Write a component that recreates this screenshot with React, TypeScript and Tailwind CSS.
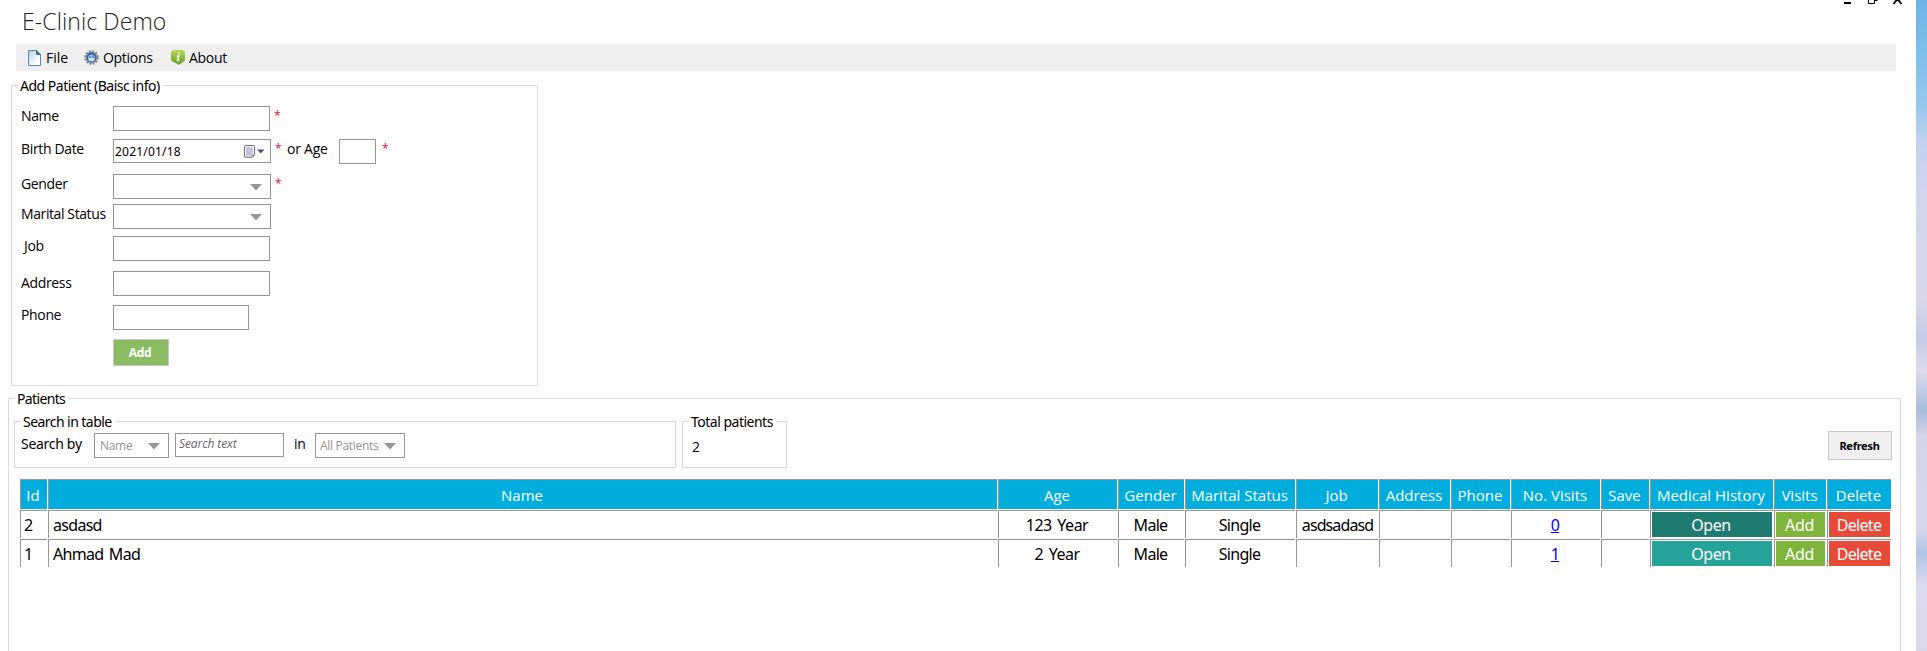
import React from "react";

type BoxProps = { className?: string; children?: React.ReactNode };

const Arrow = () => (
  <svg width="12" height="7" viewBox="0 0 12 7" className="shrink-0">
    <path d="M0 0H12L6 6.5Z" fill="#969696" />
  </svg>
);

function Label({ className = "", children }: BoxProps) {
  return <span className={`whitespace-nowrap leading-[20px] ${className}`}>{children}</span>;
}

function Field({ className = "", children }: BoxProps) {
  return <div className={`flex shrink-0 items-center border border-[#969696] bg-[#fffdfe] ${className}`}>{children}</div>;
}

const Star = ({ className = "" }: BoxProps) => (
  <span className={`w-[7px] text-[12px] leading-[20px] text-[#e0103c] ${className}`}>*</span>
);

function Group({ title, titleClass, className = "", children }: BoxProps & { title: string; titleClass: string }) {
  return (
    <section className={`border border-[#dbdbdb] ${className}`}>
      <div className="flex h-0 items-center pl-[6px]">
        <h2 className={`whitespace-nowrap bg-[#fffdfe] pl-[2px] pr-[3px] font-['Noto_Sans',sans-serif] text-[14px] leading-[18px] ${titleClass}`}>{title}</h2>
      </div>
      {children}
    </section>
  );
}

function FileIcon() {
  return (
    <svg width="13" height="16" viewBox="0 0 13 16">
      <defs>
        <linearGradient id="paper" x1="0" y1="0" x2="1" y2="1">
          <stop offset="0" stopColor="#a9cce2" />
          <stop offset=".7" stopColor="#fff" />
        </linearGradient>
      </defs>
      <path d="M.5.5H8.5L12.5 4.5V15.5H.5Z" fill="url(#paper)" stroke="#5b89a8" />
      <path d="M8.5.5V4.5H12.5Z" fill="#2f6e9c" stroke="#3f7196" />
    </svg>
  );
}

function GearIcon() {
  return (
    <svg width="15" height="15" viewBox="0 0 15 15">
      <circle cx="7.5" cy="7.5" r="6.4" fill="#a9acb0" stroke="#85898e" strokeWidth="2" strokeDasharray="1.7 1.65" />
      <circle cx="7.5" cy="7.5" r="5" fill="#2a5f9a" />
      <circle cx="7.5" cy="8" r="3.5" fill="#9fcdf0" />
      <path d="M6 5.5V8M9 5.5V8" stroke="#2a5f9a" strokeWidth="1" />
      <path d="M5 9.500H10" stroke="#fff" strokeWidth="1.500" />
    </svg>
  );
}

function InfoIcon() {
  return (
    <svg width="14" height="15" viewBox="0 0 14 15">
      <defs>
        <linearGradient id="green" x1="0" y1="0" x2="0" y2="1">
          <stop offset="0" stopColor="#b9d95c" />
          <stop offset="1" stopColor="#5c9a18" />
        </linearGradient>
      </defs>
      <path d="M2 0H12L14 2V10L12 12L7.500 15L6 13.500L2 12L0 10V2Z" fill="url(#green)" />
      <path d="M8 2.600V4.400M5.800 6.200H7.700L6.600 10.500H8.500" fill="none" stroke="#fff" strokeWidth="1.6" />
    </svg>
  );
}

function CalendarIcon() {
  return (
    <svg width="21" height="13" viewBox="0 0 21 13">
      <path d="M.5 1.500Q.5.5 1.500.5H9.500Q10.500.5 10.500 1.500V9.500L8.500 12.200H1.500Q.5 12.200 .5 11Z" fill="#f1f1f6" stroke="#77696b" />
      <path d="M2 3H9M2 5H9M2 7H9M2 9H9M3 2V11M5 2V11M7 2V11" stroke="#a5afc6" strokeWidth=".8" />
      <path d="M10.500 9.500L8.500 12V9.500Z" fill="#77696b" />
      <path d="M13 4.500H20.500L16.750 8.500Z" fill="#3c5a8c" />
    </svg>
  );
}

const columns = [
  ["Id", "w-[28px]"],
  ["Name", "w-[950px]"],
  ["Age", "w-[120px]"],
  ["Gender", "w-[67px]"],
  ["Marital Status", "w-[111px]"],
  ["Job", "w-[83px]"],
  ["Address", "w-[72px]"],
  ["Phone", "w-[60px]"],
  ["No. Visits", "w-[90px]"],
  ["Save", "w-[49px]"],
  ["Medical History", "w-[124px]"],
  ["Visits", "w-[53px]"],
  ["Delete", "w-[65px]"],
];

const patients = [
  ["2", "asdasd", "123 Year", "Male", "Single", "asdsadasd", "", "", "0"],
  ["1", "Ahmad Mad", "2 Year", "Male", "Single", "", "", "", "1"],
];

function PatientRow({ row, open }: { row: string[]; open: string }) {
  return (
    <div className="flex h-[29px] font-['Noto_Sans',sans-serif] text-[16px] tracking-[-0.7px] [word-spacing:2px]">
      {columns.map(([name, width], i) => (
        <div key={name} className={`shrink-0 pr-px ${width}`}>
          <div className={`flex h-[28px] items-center whitespace-nowrap border-l border-t border-[#969696] ${i === 0 ? "pl-[3px]" : i === 1 ? "pl-[4px]" : i === 5 ? "justify-center tracking-[-0.9px]" : i < 9 ? "justify-center pr-[2px]" : ""} ${i === 2 ? "tracking-[-0.5px]" : ""}`}>
            {i < 8 && row[i]}
            {i === 8 && <a className="text-[#0000ee] underline">{row[i]}</a>}
            {i === 10 && <button className={`mx-px h-[25px] grow pr-[2px] pt-px leading-[24px] tracking-[-0.45px] text-white ${open}`}>Open</button>}
            {i === 11 && <button className="mx-px h-[25px] grow bg-[#81b43c] pr-[2px] pt-px leading-[24px] tracking-[-0.35px] text-white">Add</button>}
            {i === 12 && <button className="mx-px h-[25px] grow bg-[#e84a3a] pr-px pt-px leading-[24px] text-white">Delete</button>}
          </div>
        </div>
      ))}
    </div>
  );
}

export default function App() {
  return (
    <div className="flex h-[651px] w-[1927px] overflow-hidden bg-[#fffdfe] font-['Open_Sans',sans-serif] text-[14px] text-black">
      <main className="w-[1916px] shrink-0">
        <header className="flex h-[44px] justify-between">
          <h1 className="pl-[22px] pt-[5px] text-[23px] font-light leading-[32px] tracking-[0.1px] text-[#222]">E-Clinic Demo</h1>
          <svg width="75" height="5" viewBox="0 0 75 5" className="mr-[3px]" fill="none" stroke="#000">
            <path d="M6 3H13" strokeWidth="2" />
            <path d="M30.500 0V3.500H36.500V0M37 .5H39.500" />
            <path d="M55.500 4L59.500 -1L63.500 4" strokeWidth="1.800" />
          </svg>
        </header>
        <nav className="ml-[16px] flex h-[27px] w-[1880px] items-center bg-[#f0eeef] pl-[12px] leading-[20px] tracking-[-0.3px]">
          <div className="flex w-[56px] items-center gap-[5px] tracking-normal"><FileIcon />File</div>
          <div className="flex w-[87px] items-center gap-[4px]"><GearIcon />Options</div>
          <div className="flex items-center gap-[4px]"><InfoIcon />About</div>
        </nav>

        <Group title="Add Patient (Baisc info)" titleClass="tracking-[-0.5px]" className="ml-[11px] mt-[14px] h-[301px] w-[527px]">
          <div className="grid grid-cols-[92px_auto] pl-[9px] pt-[20px] tracking-[-0.35px]">
            <Label>Name</Label>
            <div className="flex h-[33px]"><Field className="h-[25px] w-[157px]" /><Star className="ml-[4px]" /></div>
            <Label>Birth Date</Label>
            <div className="flex h-[35px]">
              <Field className="h-[24px] w-[158px] justify-between border-[#6c6c6c] pl-px pr-[5px] pt-px font-['Noto_Sans',sans-serif] text-[12px] tracking-[0.2px]">2021/01/18<CalendarIcon /></Field>
              <Star className="ml-[4px]" />
              <Label className="ml-[5px] w-[52px] tracking-[-0.25px]">or Age</Label>
              <Field className="h-[25px] w-[37px]" />
              <Star className="ml-[6px]" />
            </div>
            <Label>Gender</Label>
            <div className="flex h-[30px]"><Field className="h-[25px] w-[158px] justify-end pr-[8px] pt-px"><Arrow /></Field><Star className="ml-[4px]" /></div>
            <Label className="tracking-[-0.4px]">Marital Status</Label>
            <div className="h-[32px]"><Field className="h-[25px] w-[158px] justify-end pr-[8px] pt-px"><Arrow /></Field></div>
            <Label className="pl-[3px]">Job</Label>
            <div className="h-[35px]"><Field className="h-[25px] w-[157px]" /></div>
            <Label className="pt-[2px]">Address</Label>
            <div className="h-[34px]"><Field className="h-[25px] w-[157px]" /></div>
            <Label>Phone</Label>
            <div className="h-[34px]"><Field className="h-[25px] w-[136px]" /></div>
            <span />
            <button className="h-[27px] w-[56px] border border-[#c8c8c8] bg-[#8cbc61] pr-[2px] pt-px text-[12px] font-bold text-white">Add</button>
          </div>
        </Group>

        <Group title="Patients" titleClass="tracking-[-0.65px]" className="ml-[8px] mt-[12px] h-[300px] w-[1893px]">
          <div className="flex pl-[5px] pt-[22px]">
            <Group title="Search in table" titleClass="tracking-[-0.55px]" className="h-[47px] w-[662px]">
              <div className="flex pl-[6px] pt-[11px]">
                <Label className="w-[73px] pt-px font-['Noto_Sans',sans-serif] tracking-[-0.3px]">Search by</Label>
                <Field className="h-[25px] w-[75px] justify-between pl-[5px] pr-[8px] pt-px text-[12px] tracking-[-0.3px] text-[#969696]">Name<Arrow /></Field>
                <Field className="ml-[6px] h-[24px] w-[109px] pb-[2px] pl-[3px] text-[12px] italic tracking-[-0.1px] text-[#666]">Search text</Field>
                <Label className="ml-[10px] w-[21px] pt-px tracking-[-0.3px]">in</Label>
                <Field className="h-[25px] w-[90px] justify-between pl-[4px] pr-[8px] pt-px text-[12px] tracking-[-0.3px] text-[#969696]">All Patients<Arrow /></Field>
              </div>
            </Group>
            <Group title="Total patients" titleClass="tracking-[-0.5px]" className="ml-[6px] h-[47px] w-[105px]">
              <div className="pl-[9px] pt-[15px] leading-[20px]">2</div>
            </Group>
            <button className="ml-[1041px] mt-[10px] h-[29px] w-[64px] border border-[#c8c8c8] bg-[#f0eeef] pr-px pt-px font-['Noto_Sans',sans-serif] text-[11px] font-bold tracking-[-0.25px]">Refresh</button>
          </div>
          <div className="ml-[11px] mt-[11px] w-[1872px]">
            <div className="flex h-[31px] text-[15px] text-white">
              {columns.map(([name, width]) => (
                <div key={name} className={`shrink-0 pr-px ${width}`}>
                  <div className="flex h-[30px] items-center justify-center whitespace-nowrap border-l border-t border-[#969696] bg-[#00addc] pr-[2px] pt-[2px]">{name}</div>
                </div>
              ))}
            </div>
            <PatientRow row={patients[0]} open="bg-[#1f7a70]" />
            <PatientRow row={patients[1]} open="bg-[#26a399]" />
          </div>
        </Group>
      </main>
      <aside className="grow bg-[linear-gradient(180deg,#6db4e6_0%,#7fc0ec_9%,#9cc8ec_17%,#c2d2ee_22%,#d0d6ee_30%,#d8d8ea_46%,#c4cce6_52%,#dcdcec_57%,#a8bcdc_63%,#d4d4e8_67%,#d8d8ec_81%,#b0c4e4_85%,#dcdcf0_90%,#dcd6ea_100%)]" />
    </div>
  );
}
